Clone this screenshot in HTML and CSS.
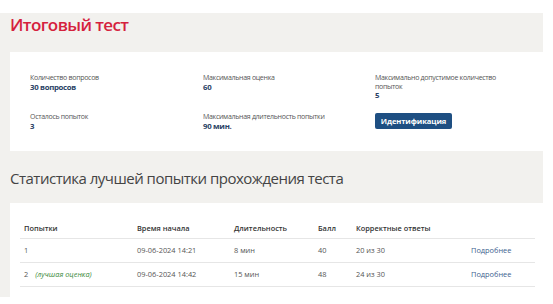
FILE: index.html
```html
<!DOCTYPE html>
<html lang="ru">
<head>
<meta charset="utf-8">
<link rel="stylesheet" href="styles.css">
</head>
<body>
<div class="page">
  <h1 class="title">Итоговый тест</h1>
  <div class="card info">
    <div class="item">
      <div class="label">Количество вопросов</div>
      <div class="value">30 вопросов</div>
    </div>
    <div class="item">
      <div class="label">Максимальная оценка</div>
      <div class="value">60</div>
    </div>
    <div class="item wide">
      <div class="label">Максимально допустимое количество попыток</div>
      <div class="value">5</div>
    </div>
    <div class="item">
      <div class="label">Осталось попыток</div>
      <div class="value">3</div>
    </div>
    <div class="item">
      <div class="label">Максимальная длительность попытки</div>
      <div class="value">90 мин.</div>
    </div>
    <div class="item">
      <button class="btn">Идентификация</button>
    </div>
  </div>
  <h2 class="subtitle">Статистика лучшей попытки прохождения теста</h2>
  <div class="card tablecard">
    <table class="stats">
      <thead>
        <tr>
          <th class="c1">Попытки</th>
          <th class="c2">Время начала</th>
          <th class="c3">Длительность</th>
          <th class="c4">Балл</th>
          <th class="c5">Корректные ответы</th>
          <th class="c6"></th>
        </tr>
      </thead>
      <tbody>
        <tr>
          <td>1</td>
          <td>09-06-2024 14:21</td>
          <td>8 мин</td>
          <td>40</td>
          <td>20 из 30</td>
          <td><a class="more" href="#">Подробнее</a></td>
        </tr>
        <tr>
          <td>2 <span class="best">(лучшая оценка)</span></td>
          <td>09-06-2024 14:42</td>
          <td>15 мин</td>
          <td>48</td>
          <td>24 из 30</td>
          <td><a class="more" href="#">Подробнее</a></td>
        </tr>
      </tbody>
    </table>
  </div>
</div>
</body>
</html>
```

FILE: styles.css
```css
* { box-sizing: border-box; }
html, body {
  margin: 0;
  padding: 0;
  background: #ffffff;
  font-family: "Open Sans", "Noto Sans", sans-serif;
}
.page {
  margin-top: 13px;
  width: 543px;
  height: 284px;
  background: #f2f1ee;
  padding: 0 0 0 10px;
  overflow: hidden;
}
.title {
  margin: 0;
  padding-top: 1px;
  height: 39px;
  font-size: 17px;
  line-height: 21px;
  font-weight: 600;
  letter-spacing: -0.6px;
  color: #d5213d;
}
.card {
  background: #ffffff;
}
.info {
  display: grid;
  grid-template-columns: 173px 172px 150px;
  row-gap: 13px;
  padding: 22px 0 21px 20px;
  height: 99px;
}
.label {
  font-size: 7px;
  line-height: 8.5px;
  letter-spacing: -0.3px;
  color: #555555;
}
.value {
  font-size: 7.8px;
  line-height: 9px;
  font-weight: 700;
  letter-spacing: -0.3px;
  color: #2b4366;
}
.wide .label { width: 122px; }
.btn {
  display: block;
  margin-top: 0;
  width: 77px;
  height: 16px;
  padding: 0;
  border: none;
  border-radius: 2px;
  background: #1e4f82;
  color: #ffffff;
  font-family: "Open Sans", "Noto Sans", sans-serif;
  font-size: 7.6px;
  font-weight: 700;
  letter-spacing: -0.1px;
  line-height: 16px;
}
.subtitle {
  margin: 0;
  padding-top: 16px;
  height: 52px;
  font-size: 15px;
  line-height: 22px;
  font-weight: 400;
  letter-spacing: -0.5px;
  color: #444444;
}
.tablecard {
  height: 94px;
  padding: 16px 8px 0 10px;
}
.stats {
  width: 515px;
  border-collapse: collapse;
  font-size: 7.4px;
  color: #555555;
}
.stats th, .stats td {
  text-align: left;
  padding: 0 0 0 4px;
  vertical-align: middle;
}
.stats th {
  height: 19px;
  font-weight: 600;
  color: #333333;
  border-bottom: 1px solid #e6e6e6;
}
.stats td {
  height: 24px;
  border-bottom: 1px solid #e6e6e6;
}
.c1 { width: 113px; }
.c2 { width: 97px; }
.c3 { width: 84px; }
.c4 { width: 38px; }
.c5 { width: 115px; }
.best {
  margin-left: 5px;
  font-style: italic;
  color: #3b8a3b;
}
.more {
  color: #3d5f8f;
  text-decoration: none;
}
```
